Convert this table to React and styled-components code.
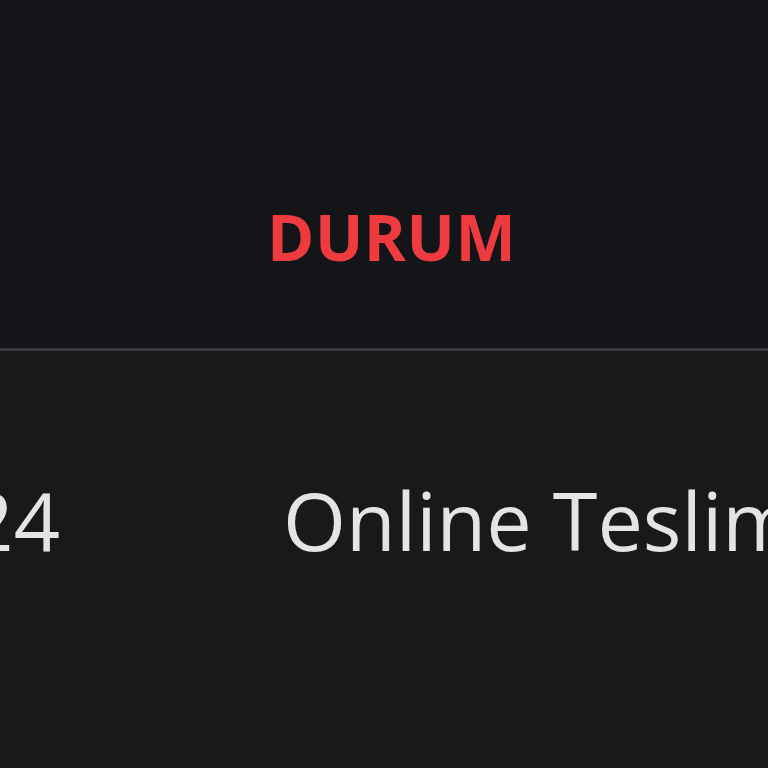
import React from 'react'
import styled, { createGlobalStyle } from 'styled-components'

const Global = createGlobalStyle`
  html, body {
    margin: 0;
    padding: 0;
    background: #181a1a;
    overflow: hidden;
  }
`

const Table = styled.div`
  width: 768px;
  height: 768px;
  overflow: hidden;
  font-family: "Open Sans", "Noto Sans", sans-serif;
  display: flex;
  flex-direction: column;
`

const Row = styled.div`
  display: grid;
  grid-template-columns: 225px 1fr;
  background: ${props => props.head ? '#141518' : '#181a1a'};
  border-bottom: ${props => props.head ? '3px solid #38393b' : 'none'};
  padding: ${props => props.head ? '205px 0 79px' : '128px 0 0'};
`

const Cell = styled.div`
  display: flex;
  justify-content: ${props => props.right ? 'flex-end' : 'flex-start'};
  padding-left: ${props => props.pad || 0}px;
  padding-right: ${props => props.right ? 165 : 0}px;
  white-space: nowrap;
  min-width: 0;
`

const HeadText = styled.span`
  color: #ee3b3f;
  font-size: 64px;
  line-height: 64px;
  font-weight: 700;
  letter-spacing: 0.5px;
`

const BodyText = styled.span`
  color: #e4e4e4;
  font-size: 81px;
  line-height: 81px;
  font-weight: 400;
`

export default function App() {
  return (
    <Table>
      <Global />
      <Row head>
        <Cell right />
        <Cell pad={42}><HeadText>DURUM</HeadText></Cell>
      </Row>
      <Row>
        <Cell right><BodyText>12.05.2024</BodyText></Cell>
        <Cell pad={58}><BodyText>Online Teslim</BodyText></Cell>
      </Row>
    </Table>
  )
}
